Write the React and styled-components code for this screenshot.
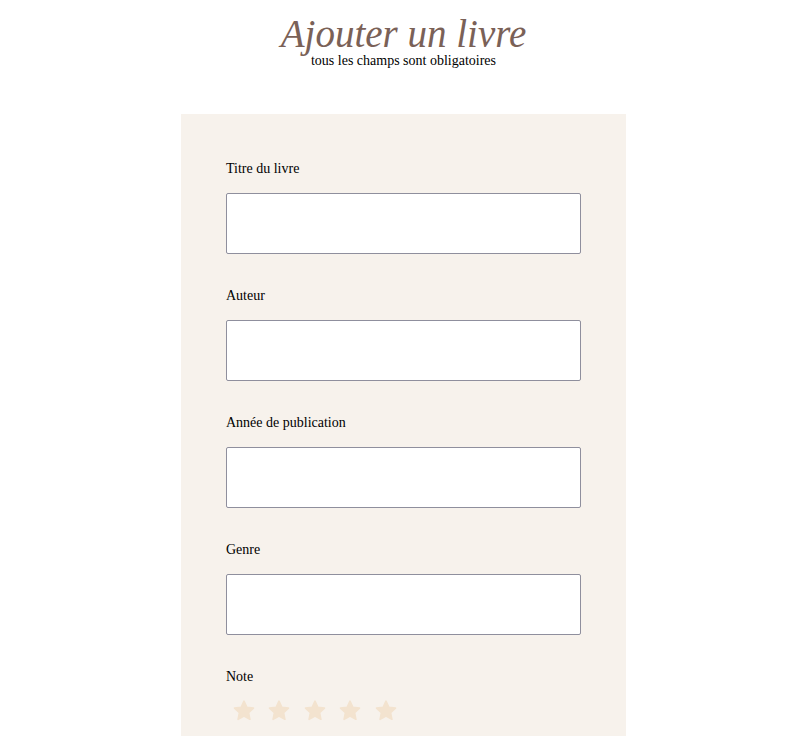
import React from "react"
import styled, { createGlobalStyle } from "styled-components"

const GlobalStyle = createGlobalStyle`
  body {
    margin: 0;
    background: #ffffff;
    font-family: "Liberation Serif", "Times New Roman", serif;
    color: #000;
  }
`

const Page = styled.div`
  display: flex;
  flex-direction: column;
  align-items: center;
`

const Header = styled.header`
  display: flex;
  flex-direction: column;
  align-items: center;
  padding-top: 15px;
  margin-bottom: 45px;
`

const Title = styled.h1`
  margin: 0;
  font-family: "Liberation Serif", "Times New Roman", serif;
  font-style: italic;
  font-weight: normal;
  font-size: 39px;
  line-height: 38px;
  color: #7a6157;
`

const Subtitle = styled.p`
  margin: 0;
  font-size: 14px;
  line-height: 16px;
`

const Panel = styled.form`
  width: 445px;
  box-sizing: border-box;
  background: #f7f2ec;
  padding: 47px 45px 40px;
`

const Field = styled.div`
  display: flex;
  flex-direction: column;
  margin-bottom: ${(p) => (p.last ? 0 : "34px")};
`

const Label = styled.label`
  font-size: 14px;
  line-height: 16px;
  margin-bottom: ${(p) => p.gap || "16px"};
`

const Input = styled.input`
  box-sizing: border-box;
  width: 355px;
  height: 61px;
  border: 1px solid #8f8f9d;
  border-radius: 2px;
  background: #fff;
  padding: 0 8px;
  font-family: inherit;
  font-size: 16px;
`

const Stars = styled.div`
  display: flex;
  gap: 11.5px;
  padding-left: 5.5px;
`

const Star = () => (
  <svg width="24" height="24" viewBox="0 0 24 24">
    <path
      d="M12 2.2l2.9 6.1 6.6.8-4.9 4.6 1.3 6.6L12 17l-5.9 3.3 1.3-6.6-4.9-4.6 6.6-.8z"
      fill="#f3e3cf"
      stroke="#f3e3cf"
      strokeWidth="1.6"
      strokeLinejoin="round"
    />
  </svg>
)

const fields = ["Titre du livre", "Auteur", "Année de publication", "Genre"]

export default function App() {
  return (
    <Page>
      <GlobalStyle />
      <Header>
        <Title>Ajouter un livre</Title>
        <Subtitle>tous les champs sont obligatoires</Subtitle>
      </Header>
      <Panel onSubmit={(e) => e.preventDefault()}>
        {fields.map((f) => (
          <Field key={f}>
            <Label>{f}</Label>
            <Input type="text" />
          </Field>
        ))}
        <Field last>
          <Label gap="14px">Note</Label>
          <Stars>
            {[0, 1, 2, 3, 4].map((i) => (
              <Star key={i} />
            ))}
          </Stars>
        </Field>
      </Panel>
    </Page>
  )
}
